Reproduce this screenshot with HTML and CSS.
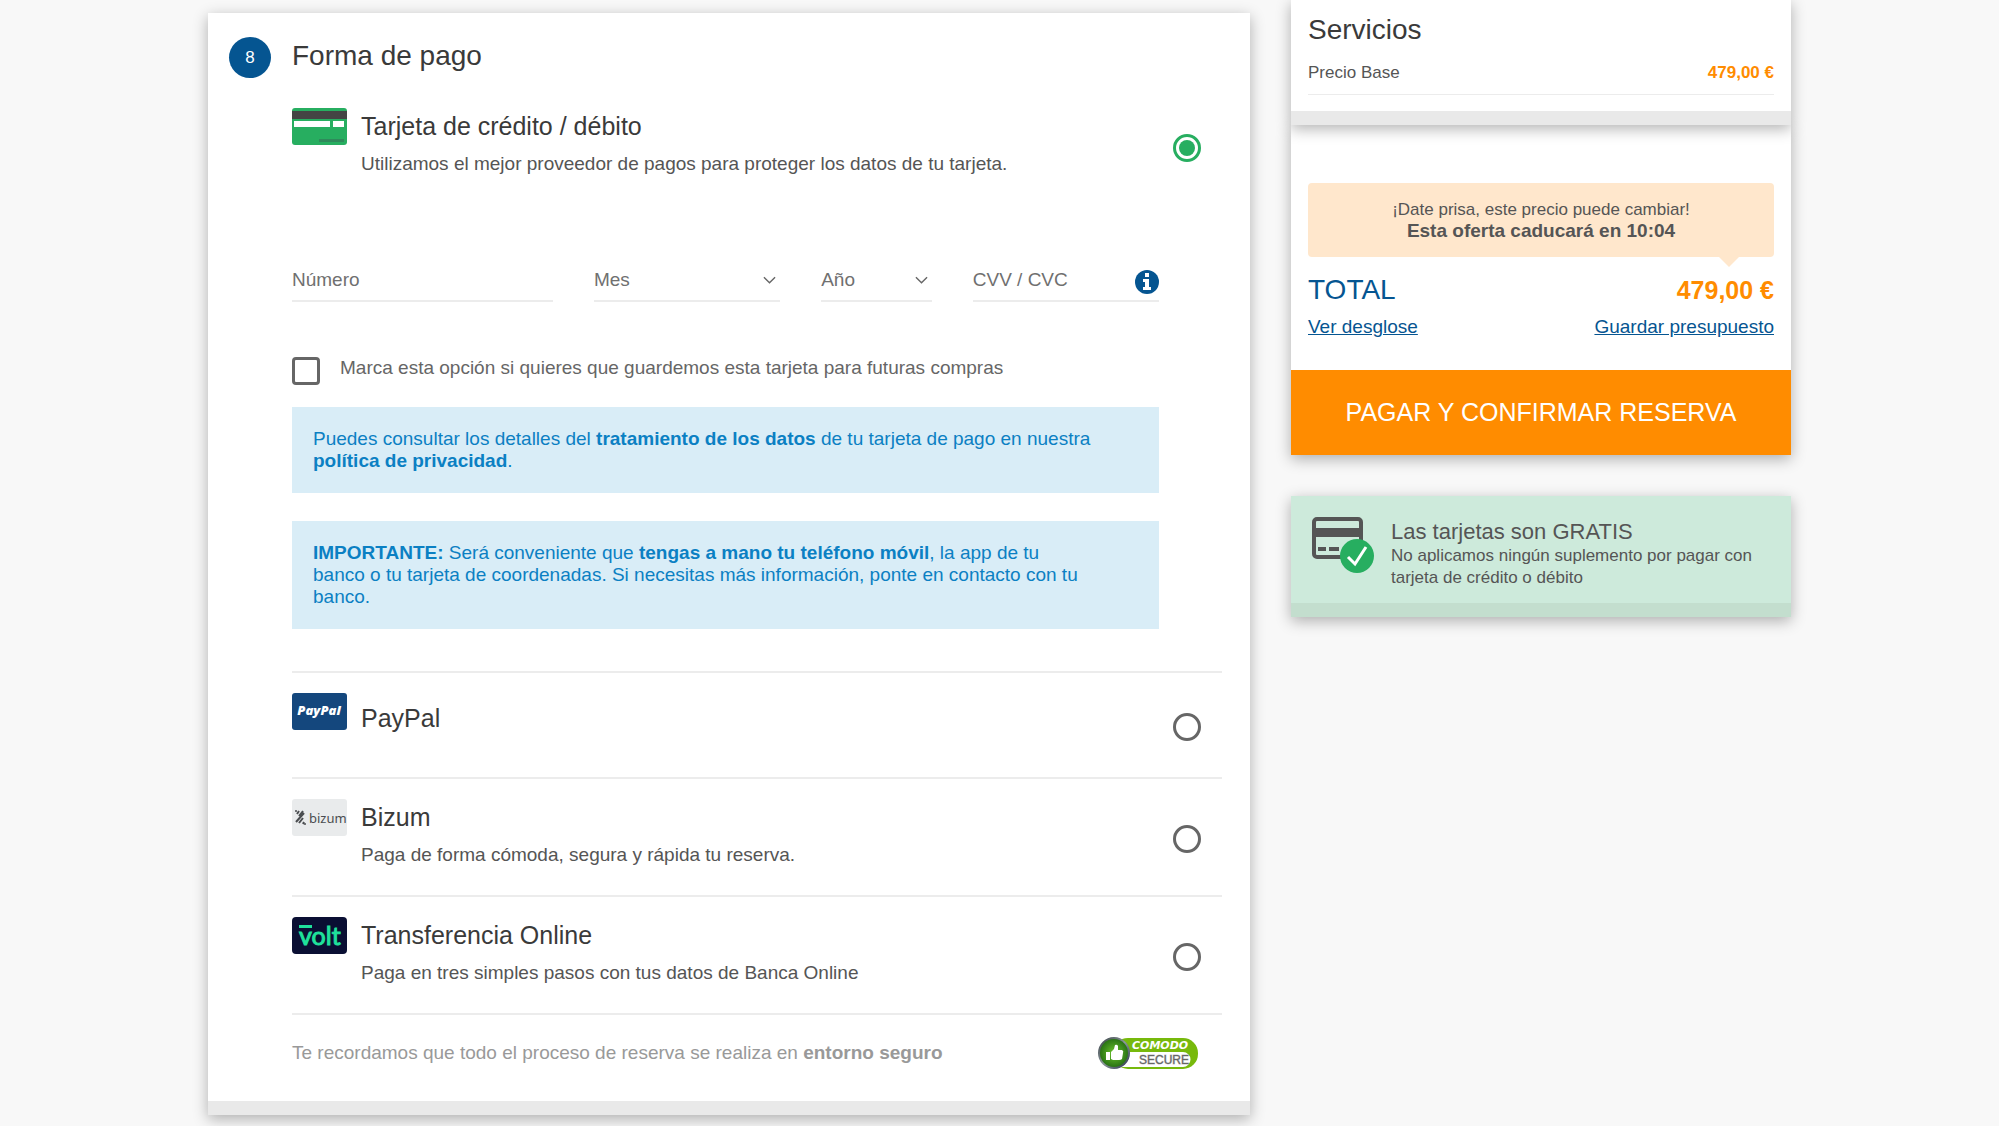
FILE: index.html
```html
<!DOCTYPE html>
<html lang="es">
<head>
<meta charset="utf-8">
<meta name="viewport" content="width=device-width, initial-scale=1">
<title>Forma de pago</title>
<link rel="stylesheet" href="styles.css">
</head>
<body>
<div class="page">
  <main class="card payment">
    <header class="step">
      <span class="step-number">8</span>
      <h1 class="heading">Forma de pago</h1>
    </header>

    <form class="payment-body">
      <section class="option option-card">
        <svg class="brand" viewBox="0 0 55 37" aria-hidden="true">
          <rect width="55" height="37" rx="3" fill="#27ae60"/>
          <rect y="3" width="55" height="8" fill="#444"/>
          <rect x="2" y="13" width="36" height="6" fill="#fff"/>
          <rect x="41" y="13" width="11" height="6" fill="#fff"/>
          <rect x="27" y="31" width="25" height="3" fill="#2f8a5b"/>
        </svg>
        <label class="option-text" for="pay-card">
          <span class="option-title">Tarjeta de crédito / débito</span>
          <span class="option-desc">Utilizamos el mejor proveedor de pagos para proteger los datos de tu tarjeta.</span>
        </label>
        <input class="radio" type="radio" name="method" id="pay-card" checked>
      </section>

      <div class="card-form">
        <div class="fields">
          <div class="field"><input class="control" type="text" placeholder="Número" aria-label="Número"></div>
          <div class="field">
            <select class="control" aria-label="Mes"><option>Mes</option></select>
            <svg class="chevron" viewBox="0 0 14 8" aria-hidden="true"><path d="M1 1l6 6 6-6"/></svg>
          </div>
          <div class="field">
            <select class="control" aria-label="Año"><option>Año</option></select>
            <svg class="chevron" viewBox="0 0 14 8" aria-hidden="true"><path d="M1 1l6 6 6-6"/></svg>
          </div>
          <div class="field">
            <input class="control" type="text" placeholder="CVV / CVC" aria-label="CVV / CVC">
            <svg class="info" viewBox="0 0 24 24" aria-hidden="true">
              <circle cx="12" cy="12" r="12" fill="#055591"/>
              <path fill="#fff" d="M10 3h4v4h-4zM8 9h6v8h2v3H8v-3h2v-5H8z"/>
            </svg>
          </div>
        </div>

        <div class="save">
          <input class="check" type="checkbox" id="save-card">
          <label for="save-card">Marca esta opción si quieres que guardemos esta tarjeta para futuras compras</label>
        </div>

        <p class="notice">Puedes consultar los detalles del <strong>tratamiento de los datos</strong> de tu tarjeta de pago en nuestra <strong>política de privacidad</strong>.</p>
        <p class="notice"><strong>IMPORTANTE:</strong> Será conveniente que <strong>tengas a mano tu teléfono móvil</strong>, la app de tu banco o tu tarjeta de coordenadas. Si necesitas más información, ponte en contacto con tu banco.</p>
      </div>

      <section class="option option-short">
        <svg class="brand" viewBox="0 0 55 37" aria-hidden="true">
          <rect width="55" height="37" rx="3" fill="#14477d"/>
          <text x="27" y="22" text-anchor="middle" class="logo-paypal">PayPal</text>
        </svg>
        <label class="option-text" for="pay-paypal">
          <span class="option-title">PayPal</span>
        </label>
        <input class="radio" type="radio" name="method" id="pay-paypal">
      </section>

      <section class="option">
        <svg class="brand" viewBox="0 0 55 37" aria-hidden="true">
          <rect width="55" height="37" rx="3" fill="#e9ebec"/>
          <g stroke="#4a4d50" stroke-width="2" fill="none">
            <path d="M5 15l2-3M7 17l4-5M4 23l8-9M7 24l4-5M11 25l1-2"/>
          </g>
          <circle cx="4" cy="12" r="1" fill="#4a4d50"/><circle cx="13" cy="25" r="1" fill="#4a4d50"/>
          <text x="17" y="24" class="logo-bizum">bizum</text>
        </svg>
        <label class="option-text" for="pay-bizum">
          <span class="option-title">Bizum</span>
          <span class="option-desc">Paga de forma cómoda, segura y rápida tu reserva.</span>
        </label>
        <input class="radio" type="radio" name="method" id="pay-bizum">
      </section>

      <section class="option">
        <svg class="brand" viewBox="0 0 55 37" aria-hidden="true">
          <rect width="55" height="37" rx="4" fill="#0a0f33"/>
          <rect x="7" y="8" width="13" height="3" fill="#1fe19b"/>
          <text x="7" y="28" class="logo-volt">volt</text>
        </svg>
        <label class="option-text" for="pay-volt">
          <span class="option-title">Transferencia Online</span>
          <span class="option-desc">Paga en tres simples pasos con tus datos de Banca Online</span>
        </label>
        <input class="radio" type="radio" name="method" id="pay-volt">
      </section>

      <footer class="secure">
        <p>Te recordamos que todo el proceso de reserva se realiza en <strong>entorno seguro</strong></p>
        <svg class="seal" viewBox="0 0 102 34" role="img" aria-label="Comodo Secure">
          <defs>
            <radialGradient id="seal-green"><stop offset="0" stop-color="#6cc52c"/><stop offset="1" stop-color="#2a7415"/></radialGradient>
            <linearGradient id="seal-rim" x1="0" y1="0" x2="1" y2="1"><stop offset="0" stop-color="#333b40"/><stop offset=".5" stop-color="#8b979b"/><stop offset="1" stop-color="#222a44"/></linearGradient>
          </defs>
          <rect x="16" y="2" width="85" height="31" rx="15" fill="#77b90c"/>
          <path d="M20 16H86a7 7 0 0 1 0 15H20z" fill="#fff"/>
          <text x="35" y="13" class="seal-top">COMODO</text>
          <text x="42" y="28" class="seal-bottom">SECURE</text>
          <circle cx="17" cy="17" r="16" fill="url(#seal-rim)"/>
          <circle cx="17" cy="17" r="14" fill="url(#seal-green)"/>
          <path fill="#fff" d="M9 16h4v8H9zM14 16l3-3 1-4q2-1 3 1v4h4q2 1 1 3l-1 6q-1 1-3 1h-6l-2-1z"/>
        </svg>
      </footer>
    </form>
  </main>

  <aside class="summary">
    <section class="card services">
      <h2 class="heading">Servicios</h2>
      <div class="service-row"><span>Precio Base</span><strong>479,00 €</strong></div>
    </section>
    <section class="total">
      <div class="hurry">
        <p>¡Date prisa, este precio puede cambiar!</p>
        <p class="hurry-time">Esta oferta caducará en 10:04</p>
      </div>
      <div class="total-row"><span>TOTAL</span><strong>479,00 €</strong></div>
      <div class="links"><a href="#desglose">Ver desglose</a><a href="#presupuesto">Guardar presupuesto</a></div>
      <button class="pay" type="button">PAGAR Y CONFIRMAR RESERVA</button>
    </section>
    <section class="card free">
      <svg class="free-icon" viewBox="0 0 62 57" aria-hidden="true">
        <rect x="2" y="2" width="47" height="38" rx="3" fill="none" stroke="#555" stroke-width="4"/>
        <rect x="1" y="11" width="49" height="9" fill="#555"/>
        <path d="M6 32h8M17 32h10" stroke="#555" stroke-width="4"/>
        <circle cx="45" cy="39" r="17" fill="#27ae60"/>
        <path d="M36 40l7 7 11-17" fill="none" stroke="#fff" stroke-width="3"/>
      </svg>
      <div>
        <h2 class="free-title">Las tarjetas son GRATIS</h2>
        <p class="free-desc">No aplicamos ningún suplemento por pagar con tarjeta de crédito o débito</p>
      </div>
    </section>
  </aside>
</div>
</body>
</html>
```
FILE: styles.css
```css
* {
  box-sizing: border-box;
}

body {
  margin: 0;
  background: #f8f8f8;
  color: #555;
  font-family: "Liberation Sans", Arial, sans-serif;
  font-size: 19px;
  line-height: 22px;
}

h1,
h2,
p {
  margin: 0;
}

.page {
  display: grid;
  grid-template-columns: minmax(0, 1fr) 500px;
  gap: 41px;
  align-items: start;
  max-width: 1583px;
  margin: 0 auto;
}

.card {
  background: #fff;
  border-bottom: 14px solid #e9e9e9;
  box-shadow: 0 4px 14px rgba(0, 0, 0, 0.3);
}

.heading {
  color: #3a3a3a;
  font-size: 28px;
  font-weight: 400;
  line-height: 32px;
}

/* Payment step */
.payment {
  margin: 13px 0 11px;
  padding: 24px 28px 31px 21px;
}

.step {
  display: flex;
  align-items: flex-start;
  gap: 21px;
  height: 41px;
}

.step .heading {
  padding-top: 3px;
}

.step-number {
  width: 42px;
  height: 41px;
  border-radius: 50%;
  background: #055591;
  color: #fff;
  font-size: 17px;
  line-height: 41px;
  text-align: center;
}

.payment-body {
  margin: 8px 0 0 63px;
}

.option {
  display: grid;
  grid-template-columns: 55px 1fr 28px;
  column-gap: 14px;
  align-items: start;
  height: 118px;
  padding: 20px 21px 0 0;
  border-top: 2px solid #ececec;
}

.option-card {
  border-top-color: transparent;
}

.option-short {
  height: 106px;
}

.brand {
  display: block;
  width: 55px;
  height: 37px;
}

.option-text {
  display: grid;
  gap: 13px;
  padding-top: 4px;
}

.option-title {
  color: #3a3a3a;
  font-size: 25px;
  line-height: 28px;
}

.option-short .option-text {
  padding-top: 11px;
}

.radio,
.check {
  appearance: none;
  width: 28px;
  height: 28px;
  margin: 0;
  border: 3px solid #666;
  background: #fff;
}

.radio {
  margin-top: 26px;
  border-radius: 50%;
}

.option-short .radio {
  margin-top: 20px;
}

.radio:checked {
  border-color: #27ae60;
  background: #27ae60 content-box;
  padding: 3px;
}

.check {
  border-radius: 4px;
}

.card-form {
  padding: 53px 63px 42px 0;
}

.fields {
  display: grid;
  grid-template-columns: 262fr 187fr 111fr 187fr;
  column-gap: 41px;
}

.field {
  display: flex;
  align-items: center;
  min-width: 0;
  height: 45px;
  padding: 2px 4px 0 0;
  border-bottom: 2px solid #ececec;
}

.field:last-child {
  padding-right: 0;
}

.control {
  appearance: none;
  flex: 1;
  min-width: 0;
  height: 41px;
  padding: 0;
  border: 0;
  background: none;
  color: #707070;
  font: inherit;
}

.control::placeholder {
  color: #707070;
  opacity: 1;
}

.chevron {
  width: 13px;
  height: 8px;
  fill: none;
  stroke: #666;
  stroke-width: 1.5;
}

.info {
  width: 24px;
  height: 24px;
  margin-top: 4px;
}

.save {
  display: flex;
  gap: 20px;
  margin: 55px 0 22px;
  color: #666;
}

.notice {
  padding: 21px;
  background: #d9edf7;
  color: #0b80c3;
}

.notice + .notice {
  margin-top: 28px;
  padding-right: 68px;
}

.secure {
  display: flex;
  align-items: center;
  justify-content: space-between;
  padding: 21px 23px 0 0;
  border-top: 2px solid #ececec;
  color: #999;
}

.seal {
  width: 102px;
  height: 34px;
}

.logo-paypal {
  fill: #fff;
  font: italic 800 13px "Open Sans", sans-serif;
}

.logo-bizum {
  fill: #4a4d50;
  font: 400 13px "Noto Sans", sans-serif;
}

.logo-volt {
  fill: #1fe19b;
  font: 400 25px Lato, sans-serif;
  stroke: #1fe19b;
  stroke-width: 1px;
}

.seal-top {
  fill: #fff;
  font: italic 700 11px "DejaVu Sans", sans-serif;
}

.seal-bottom {
  fill: #666;
  stroke: #666;
  stroke-width: 1px;
  stroke-opacity: 0.4;
  font: 400 12px "Liberation Sans", sans-serif;
}

/* Price summary */
.services {
  position: relative;
  padding: 14px 17px 16px;
}

.service-row {
  display: flex;
  justify-content: space-between;
  margin-top: 16px;
  padding-bottom: 10px;
  border-bottom: 1px solid #ececec;
  font-size: 17px;
}

.service-row strong {
  color: #ff8c00;
}

.total {
  padding: 58px 17px 0;
  background: #fff;
  box-shadow: 0 4px 14px rgba(0, 0, 0, 0.3);
}

.hurry {
  position: relative;
  padding: 16px;
  border-radius: 4px;
  background: #ffe7cc;
  font-size: 17px;
  line-height: 21px;
  text-align: center;
}

.hurry::after {
  content: "";
  position: absolute;
  top: 100%;
  right: 35px;
  border: 10px solid transparent;
  border-top-color: #ffe7cc;
  border-bottom: 0;
}

.hurry-time {
  font-size: 19px;
  font-weight: 700;
}

.total-row {
  display: flex;
  justify-content: space-between;
  margin-top: 17px;
  color: #055591;
  font-size: 28px;
  line-height: 32px;
}

.total-row strong {
  color: #ff8c00;
  font-size: 25px;
}

.links {
  display: flex;
  justify-content: space-between;
  margin-top: 10px;
}

.links a {
  color: #055591;
}

.pay {
  display: block;
  width: calc(100% + 34px);
  height: 85px;
  margin: 32px -17px 0;
  padding: 0 0 2px;
  border: 0;
  background: #ff8c00;
  color: #fff;
  font: inherit;
  font-size: 25px;
}

.free {
  display: flex;
  gap: 17px;
  margin-top: 41px;
  padding: 21px 21px 14px;
  border-color: #c3dece;
  background: #cdeadb;
}

.free-icon {
  flex: none;
  width: 62px;
  height: 57px;
}

.free-title {
  padding-top: 2px;
  font-size: 22px;
  font-weight: 400;
  line-height: 26px;
}

.free-desc {
  font-size: 17px;
}
```
